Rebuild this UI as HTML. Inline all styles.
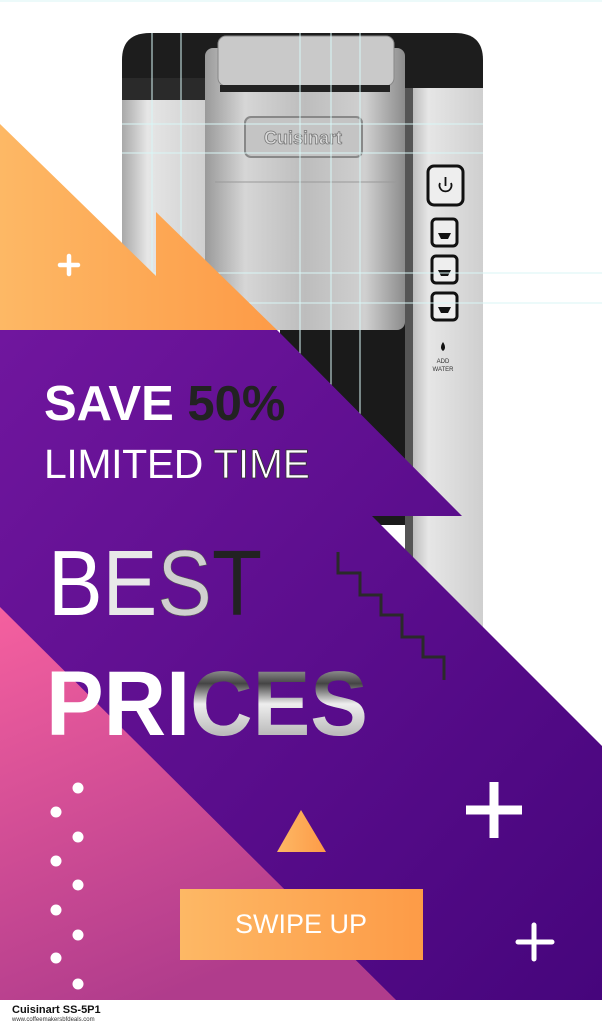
<!DOCTYPE html>
<html><head><meta charset="utf-8"><style>
html,body{margin:0;padding:0;background:#fff;}
body{width:602px;height:1024px;overflow:hidden;position:relative;font-family:"Liberation Sans",sans-serif;}
svg{position:absolute;left:0;top:0;}
</style></head><body>
<svg width="602" height="1024" viewBox="0 0 602 1024" xmlns="http://www.w3.org/2000/svg">
<defs>
<linearGradient id="sil" x1="0" x2="1" y1="0" y2="0">
<stop offset="0" stop-color="#9a9a9a"/><stop offset="0.2" stop-color="#d6d6d6"/><stop offset="0.5" stop-color="#bdbdbd"/><stop offset="0.8" stop-color="#d0d0d0"/><stop offset="1" stop-color="#8c8c8c"/></linearGradient>
<linearGradient id="pan" x1="0" x2="1"><stop offset="0" stop-color="#a8a8a8"/><stop offset="0.3" stop-color="#e6e6e6"/><stop offset="1" stop-color="#cfcfcf"/></linearGradient>
<linearGradient id="pur" x1="0" y1="0" x2="1" y2="1"><stop offset="0" stop-color="#70169e"/><stop offset="1" stop-color="#46057c"/></linearGradient>
<linearGradient id="pink" x1="0" y1="0" x2="0.4" y2="1"><stop offset="0" stop-color="#f5609f"/><stop offset="1" stop-color="#b03c8c"/></linearGradient>
<linearGradient id="org" x1="0" y1="0" x2="1" y2="0"><stop offset="0" stop-color="#fdb865"/><stop offset="1" stop-color="#fd9b47"/></linearGradient>
<linearGradient id="chr" x1="0" y1="0" x2="0" y2="1"><stop offset="0" stop-color="#eee"/><stop offset="0.3" stop-color="#444"/><stop offset="0.5" stop-color="#eee"/><stop offset="0.8" stop-color="#bbb"/><stop offset="1" stop-color="#fff"/></linearGradient>
</defs>
<path d="M122,60 Q122,33 150,33 L455,33 Q483,33 483,60 L483,100 L122,100Z" fill="#1d1d1d"/>
<rect x="122" y="95" width="85" height="240" fill="url(#pan)"/>
<rect x="122" y="78" width="85" height="22" fill="#2a2a2a"/>
<rect x="280" y="300" width="128" height="225" fill="#1a1a1a"/>
<rect x="405" y="88" width="78" height="560" fill="url(#pan)"/>
<rect x="405" y="88" width="8" height="560" fill="#555"/>
<rect x="205" y="48" width="200" height="282" rx="8" fill="url(#sil)"/>
<rect x="218" y="36" width="176" height="50" rx="8" fill="#c9c9c9" stroke="#888"/>
<rect x="220" y="85" width="170" height="7" fill="#222"/>
<rect x="245" y="117" width="117" height="40" rx="6" fill="#c4c4c4" stroke="#888" stroke-width="2"/>
<text x="303" y="144" font-size="18" font-weight="bold" fill="#dcdcdc" stroke="#777" stroke-width="0.8" text-anchor="middle">Cuisinart</text>
<line x1="215" y1="182" x2="398" y2="182" stroke="#999"/>
<rect x="428" y="166" width="35" height="39" rx="6" fill="#eee" stroke="#111" stroke-width="3"/>
<path d="M440,183 A6,6 0 1 0 451,183 M445.5,177 L445.5,186" fill="none" stroke="#111" stroke-width="1.8"/>
<rect x="432" y="219" width="25" height="27" rx="4" fill="#eee" stroke="#111" stroke-width="3"/>
<rect x="432" y="256" width="25" height="27" rx="4" fill="#eee" stroke="#111" stroke-width="3"/>
<rect x="432" y="293" width="25" height="27" rx="4" fill="#eee" stroke="#111" stroke-width="3"/>
<path d="M438,233 h13 l-3,6 h-7z M438,270 h13 l-3,6 h-7z M438,307 h13 l-3,6 h-7z" fill="#111"/>
<path d="M443,342 q-4,6 0,9 q4,-3 0,-9z" fill="#111"/>
<text x="443" y="363" font-size="6" fill="#333" text-anchor="middle">ADD</text>
<text x="443" y="371" font-size="6" fill="#333" text-anchor="middle">WATER</text>
<g stroke="#d8f6f6" stroke-width="1">
<line x1="152" y1="33" x2="152" y2="340"/><line x1="181" y1="33" x2="181" y2="340"/>
<line x1="300" y1="33" x2="300" y2="520"/><line x1="331" y1="33" x2="331" y2="520"/><line x1="360" y1="33" x2="360" y2="520"/>
<line x1="122" y1="124" x2="483" y2="124"/><line x1="122" y1="153" x2="483" y2="153"/>
<line x1="122" y1="273" x2="602" y2="273"/><line x1="122" y1="303" x2="602" y2="303"/><line x1="0" y1="1" x2="602" y2="1"/>
</g>
<path d="M0,124 L156,276 L156,212 L277,330 L0,330Z" fill="url(#org)"/>
<path d="M0,330 L277,330 L462,516 L372,516 L602,746 L602,1000 L0,1000Z" fill="url(#pur)"/>
<path d="M0,607 L396,1000 L0,1000Z" fill="url(#pink)"/>
<path d="M60,265 h18 M69,256 v18" stroke="#fff" stroke-width="4.5" stroke-linecap="round"/>
<path d="M466,810 h56 M494,782 v56" stroke="#fff" stroke-width="9"/>
<path d="M518,942 h34 M534,925 v34" stroke="#fff" stroke-width="5" stroke-linecap="round"/>
<path d="M301,810 L326,852 L277,852Z" fill="url(#org)"/>
<g fill="#fff"><circle cx="78" cy="788" r="5.5"/><circle cx="56" cy="812" r="5.5"/><circle cx="78" cy="837" r="5.5"/><circle cx="56" cy="861" r="5.5"/><circle cx="78" cy="885" r="5.5"/><circle cx="56" cy="910" r="5.5"/><circle cx="78" cy="935" r="5.5"/><circle cx="56" cy="958" r="5.5"/><circle cx="78" cy="984" r="5.5"/></g>
<path d="M338,552 V573 H360 V595 H381 V615 H402 V637 H423 V657 H444 V680" fill="none" stroke="#2a2a2a" stroke-width="3"/>
<rect x="180" y="889" width="243" height="71" fill="url(#org)"/>
<text x="301" y="933" font-size="27" fill="#fff" text-anchor="middle">SWIPE UP</text>
<text x="44" y="420" font-size="49" font-weight="bold" fill="#fff">SAVE <tspan fill="#222">50%</tspan></text>
<text x="44" y="478" font-size="41" fill="#fff" textLength="266">LIMITED <tspan fill="#fff" stroke="#333" stroke-width="0.8">TIME</tspan></text>
<text x="48" y="615" font-size="93" fill="#fff" textLength="214" lengthAdjust="spacingAndGlyphs">B<tspan fill="#e8e8e8">E</tspan><tspan fill="#d0d0d0" stroke="#555" stroke-width="0.6">S</tspan><tspan fill="#222">T</tspan></text>
<text x="46" y="735" font-size="92" font-weight="bold" fill="#fff" textLength="322" lengthAdjust="spacingAndGlyphs">PRI<tspan fill="url(#chr)">CES</tspan></text>
<rect x="0" y="1000" width="602" height="24" fill="#fff"/>
<text x="12" y="1013" font-size="11" font-weight="bold" fill="#111">Cuisinart SS-5P1</text>
<text x="12" y="1021" font-size="6" fill="#333">www.coffeemakersbfdeals.com</text>
</svg>
</body></html>
